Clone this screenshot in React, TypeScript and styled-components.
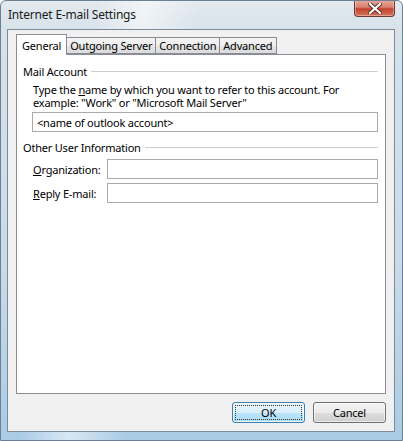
import React from 'react';
import styled, { createGlobalStyle } from 'styled-components';

const GlobalStyle = createGlobalStyle`
  html, body {
    margin: 0;
    padding: 0;
    background: #ffffff;
  }
  body {
    font-family: "Noto Sans", "Open Sans", sans-serif;
    font-size: 11px;
    letter-spacing: -0.2px;
    color: #000;
  }
`;

const Frame = styled.div`
  width: 403px;
  height: 441px;
  box-sizing: border-box;
  display: flex;
  flex-direction: column;
  background:
    linear-gradient(100deg, rgba(255,255,255,0) 20%, rgba(255,255,255,0.55) 30%, rgba(255,255,255,0) 42%),
    linear-gradient(180deg, #e2e9ef 0px, #d7e2ea 30px, #c9dbe9 60%, #a9cbe4 100%);
  border: 1px solid #6d8093;
  border-radius: 6px 6px 0 0;
  overflow: hidden;
`;

const TitleBar = styled.div`
  height: 28px;
  display: flex;
  justify-content: space-between;
  align-items: flex-start;
`;

const Title = styled.div`
  padding: 5px 0 0 7px;
  font-size: 12px;
  letter-spacing: -0.2px;
  color: #1b1b1b;
`;

const CloseButton = styled.div`
  width: 41px;
  height: 17px;
  margin: -1px 7px 0 0;
  box-sizing: border-box;
  border: 1px solid #6b3a33;
  border-top: none;
  border-radius: 0 0 4px 4px;
  background: linear-gradient(180deg, #e8a99c 0%, #d8806f 45%, #c0432e 55%, #d5725c 100%);
  display: flex;
  align-items: center;
  justify-content: center;
  box-shadow: inset 0 0 0 1px rgba(255,255,255,0.35);
`;

const Client = styled.div`
  flex: 1;
  margin: 0 7px 8px 6px;
  border: 1px solid #7e8b97;
  background: #f0f0f0;
  display: flex;
  flex-direction: column;
  padding: 3px 8px 8px 8px;
`;

const TabRow = styled.div`
  display: flex;
  align-items: flex-end;
  height: 21px;
  position: relative;
  z-index: 1;
`;

const Tab = styled.div<{ $active?: boolean }>`
  box-sizing: border-box;
  height: ${p => (p.$active ? '21px' : '17px')};
  margin-bottom: ${p => (p.$active ? '-1px' : '0')};
  padding: 0 ${p => (p.$active ? '5px' : '3px')};
  margin-left: ${p => (p.$active ? '0' : '-1px')};
  border: 1px solid #898c95;
  border-bottom: ${p => (p.$active ? 'none' : '1px solid #898c95')};
  background: ${p => (p.$active ? '#ffffff' : 'linear-gradient(180deg, #f4f4f4 0%, #eeeeee 50%, #e4e4e4 51%, #dcdcdc 100%)')};
  display: flex;
  align-items: center;
  line-height: 1;
  &:first-child { margin-left: 0; }
  &:last-child { padding: 0 4px 0 3px; }
`;

const Panel = styled.div`
  flex: 1;
  background: #ffffff;
  border: 1px solid #898c95;
  padding: 9px 7px 0 6px;
`;

const Group = styled.div`
  margin-bottom: 8px;
`;

const GroupHeader = styled.div`
  display: flex;
  align-items: center;
  gap: 4px;
  height: 14px;
  &::after {
    content: '';
    flex: 1;
    height: 1px;
    background: #c9ced4;
  }
`;

const GroupBody = styled.div`
  padding: 5px 0 0 10px;
`;

const HintLine = styled.div`
  height: 13px;
  line-height: 13px;
  white-space: nowrap;
`;

const TextBox = styled.div<{ $wide?: boolean }>`
  box-sizing: border-box;
  height: 20px;
  flex: 1;
  border: 1px solid #a7abb0;
  background: #ffffff;
  display: flex;
  align-items: center;
  padding: 0 4px;
  margin-left: ${p => (p.$wide ? '-1px' : '0')};
  margin-top: ${p => (p.$wide ? '3px' : '0')};
`;

const FieldRow = styled.div`
  display: flex;
  align-items: center;
  margin-bottom: 4px;
`;

const FieldLabel = styled.div`
  width: 74px;
`;

const Footer = styled.div`
  display: flex;
  justify-content: flex-end;
  gap: 8px;
  padding-top: 8px;
`;

const Button = styled.div<{ $default?: boolean }>`
  box-sizing: border-box;
  width: 73px;
  height: 21px;
  border: 1px solid ${p => (p.$default ? '#3c7fb1' : '#707070')};
  border-radius: 3px;
  background: ${p =>
    p.$default
      ? 'linear-gradient(180deg, #eaf6fd 0%, #d9f0fc 50%, #bee6fd 51%, #a7d9f5 100%)'
      : 'linear-gradient(180deg, #f2f2f2 0%, #ebebeb 50%, #dddddd 51%, #cfcfcf 100%)'};
  box-shadow: inset 0 0 0 1px ${p => (p.$default ? 'rgba(255,255,255,0.7)' : 'rgba(255,255,255,0.6)')};
  display: flex;
  align-items: center;
  justify-content: center;
  position: relative;
`;

const FocusRing = styled.span`
  position: absolute;
  inset: 2px;
  border: 1px dotted #3a3a3a;
  border-radius: 1px;
`;

const U = styled.span`
  text-decoration: underline;
`;

const CloseGlyph = () => (
  <svg width="14" height="11" viewBox="0 0 14 11">
    <path d="M2 1 L12 10 M12 1 L2 10" stroke="#5a2a22" strokeWidth="4" strokeLinecap="square" />
    <path d="M2 1 L12 10 M12 1 L2 10" stroke="#ffffff" strokeWidth="2.2" strokeLinecap="square" />
  </svg>
);

export default function App() {
  return (
    <>
      <GlobalStyle />
      <Frame>
        <TitleBar>
          <Title>Internet E-mail Settings</Title>
          <CloseButton>
            <CloseGlyph />
          </CloseButton>
        </TitleBar>
        <Client>
          <TabRow>
            <Tab $active>General</Tab>
            <Tab>Outgoing Server</Tab>
            <Tab>Connection</Tab>
            <Tab>Advanced</Tab>
          </TabRow>
          <Panel>
            <Group>
              <GroupHeader>Mail Account</GroupHeader>
              <GroupBody>
                <HintLine>
                  Type the <U>n</U>ame by which you want to refer to this account. For
                </HintLine>
                <HintLine>example: "Work" or "Microsoft Mail Server"</HintLine>
                <TextBox $wide>&lt;name of outlook account&gt;</TextBox>
              </GroupBody>
            </Group>
            <Group>
              <GroupHeader>Other User Information</GroupHeader>
              <GroupBody>
                <FieldRow>
                  <FieldLabel><U>O</U>rganization:</FieldLabel>
                  <TextBox />
                </FieldRow>
                <FieldRow>
                  <FieldLabel><U>R</U>eply E-mail:</FieldLabel>
                  <TextBox />
                </FieldRow>
              </GroupBody>
            </Group>
          </Panel>
          <Footer>
            <Button $default>
              <FocusRing />
              OK
            </Button>
            <Button>Cancel</Button>
          </Footer>
        </Client>
      </Frame>
    </>
  );
}
